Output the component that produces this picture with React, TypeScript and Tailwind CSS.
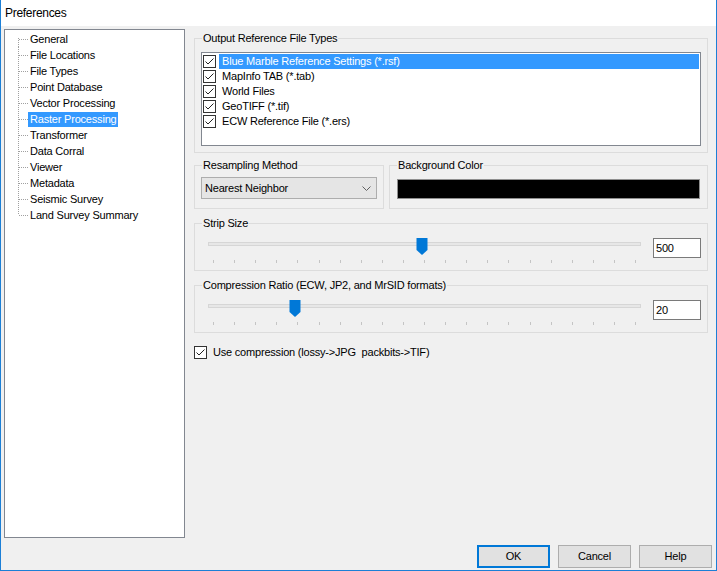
import React from "react";

const sans = "font-['Liberation_Sans',Arial,sans-serif] text-[11px] tracking-[-0.2px] text-black";

const treeItems = [
  "General",
  "File Locations",
  "File Types",
  "Point Database",
  "Vector Processing",
  "Raster Processing",
  "Transformer",
  "Data Corral",
  "Viewer",
  "Metadata",
  "Seismic Survey",
  "Land Survey Summary",
];

const fileTypes = [
  "Blue Marble Reference Settings (*.rsf)",
  "MapInfo TAB (*.tab)",
  "World Files",
  "GeoTIFF (*.tif)",
  "ECW Reference File (*.ers)",
];

function CheckBox() {
  return (
    <span className="flex h-[13px] w-[13px] shrink-0 items-center justify-center border border-[#333333] bg-white">
      <svg width="11" height="11" viewBox="0 0 11 11">
        <polyline points="1.5,5.5 4,8 9.5,2.5" fill="none" stroke="#212121" strokeWidth="1" />
      </svg>
    </span>
  );
}

function TreeRow({ label, first, last, selected }: { label: string; first: boolean; last: boolean; selected: boolean }) {
  return (
    <div className="flex h-[16px] items-center pl-[9px]">
      <svg width="14" height="16" className="shrink-0">
        <line
          x1="4.5"
          x2="4.5"
          y1={first ? 7 : 0}
          y2={last ? 8 : 16}
          stroke="#a0a0a0"
          strokeDasharray="1 1"
        />
        <line x1="5" x2="14" y1="8.5" y2="8.5" stroke="#a0a0a0" strokeDasharray="1 1" />
      </svg>
      <span className={`px-[2px] leading-[15px] ${selected ? "bg-[#3399ff] text-white" : ""}`}>{label}</span>
    </div>
  );
}

function Slider({ thumb }: { thumb: number }) {
  const ticks = Array.from({ length: 21 }, (_, i) => Math.round(12 + i * 21.1) + 0.5);
  return (
    <svg width="452" height="40" className="block shrink-0">
      <rect x="7.5" y="12.5" width="432" height="3" fill="#e7e7e7" stroke="#d6d6d6" />
      {ticks.map((x) => (
        <line key={x} x1={x} x2={x} y1="30" y2="33" stroke="#c4c4c4" />
      ))}
      <path d={`M${thumb - 5.5} 8 h11 v12 l-5.5 5 l-5.5 -5 z`} fill="#0078d7" />
    </svg>
  );
}

function Group({ title, className, children }: { title: string; className: string; children: React.ReactNode }) {
  return (
    <fieldset className={`border border-[#dcdcdc] px-[6px] ${className}`}>
      <legend className="ml-[1px] px-[1px] leading-[14px]">{title}</legend>
      {children}
    </fieldset>
  );
}

function TextValue({ value }: { value: string }) {
  return (
    <div className="mt-[8px] flex h-[20px] w-[48px] shrink-0 items-center border border-[#7a7a7a] bg-white pl-[2px]">
      {value}
    </div>
  );
}

function Button({ label, primary }: { label: string; primary?: boolean }) {
  return (
    <button
      className={`flex h-[23px] w-[73px] items-center justify-center bg-[#e1e1e1] ${
        primary ? "border-2 border-[#0078d7]" : "border border-[#adadad]"
      }`}
    >
      {label}
    </button>
  );
}

export default function App() {
  return (
    <div className={`flex h-[571px] w-[717px] flex-col border-x border-b border-[#1c7fd6] bg-[#f0f0f0] ${sans}`}>
      {/* title bar */}
      <div className="flex h-[26px] shrink-0 items-center bg-white pl-[4px] text-[12px] tracking-[-0.3px]">
        Preferences
      </div>

      <div className="flex flex-1 flex-col pl-[3px] pr-[4px] pt-[3px] pb-[2px]">
        <div className="flex h-[509px] gap-[9px]">
          {/* tree */}
          <div className="h-full w-[181px] shrink-0 border border-[#828790] bg-white pt-[1px]">
            {treeItems.map((item, i) => (
              <TreeRow
                key={item}
                label={item}
                first={i === 0}
                last={i === treeItems.length - 1}
                selected={item === "Raster Processing"}
              />
            ))}
          </div>

          {/* settings */}
          <div className="flex w-[514px] flex-col pt-[2px]">
            <Group title="Output Reference File Types" className="pt-[7px] pb-[6px]">
              <div className="h-[94px] border border-[#828790] bg-white pt-[1px]">
                {fileTypes.map((f, i) => (
                  <div key={f} className="flex h-[15px] items-center pl-[1px] pr-[1px]">
                    <CheckBox />
                    <div
                      className={`ml-[3px] flex h-[15px] flex-1 items-center pl-[3px] ${
                        i === 0 ? "bg-[#3399ff] text-white" : ""
                      }`}
                    >
                      {f}
                    </div>
                  </div>
                ))}
              </div>
            </Group>

            <div className="mt-[5px] flex gap-[5px]">
              <Group title="Resampling Method" className="w-[190px] shrink-0 pt-[5px] pb-[9px]">
                <div className="flex h-[22px] items-center justify-between border border-[#adadad] bg-[#e5e5e5] pl-[3px] pr-[5px]">
                  <span>Nearest Neighbor</span>
                  <svg width="9" height="5" viewBox="0 0 9 5">
                    <polyline points="0.5,0.5 4.5,4.5 8.5,0.5" fill="none" stroke="#606060" />
                  </svg>
                </div>
              </Group>
              <Group title="Background Color" className="flex-1 pt-[7px] pb-[9px]">
                <div className="ml-[1px] mr-[1px] h-[20px] border border-[#8f8f8f] bg-black" />
              </Group>
            </div>

            <Group title="Strip Size" className="mt-[7px]">
              <div className="flex">
                <Slider thumb={221} />
                <TextValue value="500" />
              </div>
            </Group>

            <Group title="Compression Ratio (ECW, JP2, and MrSID formats)" className="mt-[7px]">
              <div className="flex">
                <Slider thumb={94} />
                <TextValue value="20" />
              </div>
            </Group>

            <div className="mt-[11px] flex items-center gap-[6px]">
              <CheckBox />
              <span>Use compression (lossy-&gt;JPG&nbsp; packbits-&gt;TIF)</span>
            </div>
          </div>
        </div>

        <div className="mt-[7px] flex justify-end gap-[8px]">
          <Button label="OK" primary />
          <Button label="Cancel" />
          <Button label="Help" />
        </div>
      </div>
    </div>
  );
}
